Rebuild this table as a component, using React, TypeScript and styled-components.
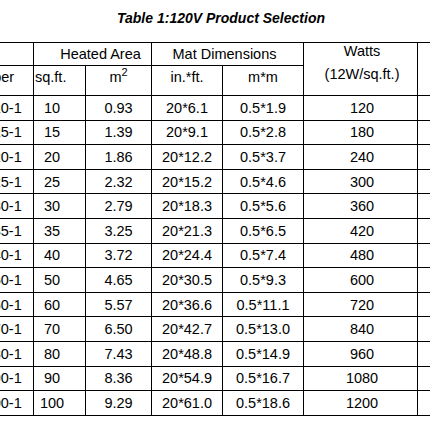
import React from 'react'
import styled, { createGlobalStyle } from 'styled-components'

const GlobalStyle = createGlobalStyle`
  html, body {
    margin: 0;
    padding: 0;
    background: #fff;
    overflow: hidden;
  }
  body {
    font-family: 'Liberation Sans', Arial, sans-serif;
    color: #000;
  }
`

type Row = [number, string, string, string, number]

const ROWS: Row[] = [
  [10, '0.93', '20*6.1', '0.5*1.9', 120],
  [15, '1.39', '20*9.1', '0.5*2.8', 180],
  [20, '1.86', '20*12.2', '0.5*3.7', 240],
  [25, '2.32', '20*15.2', '0.5*4.6', 300],
  [30, '2.79', '20*18.3', '0.5*5.6', 360],
  [35, '3.25', '20*21.3', '0.5*6.5', 420],
  [40, '3.72', '20*24.4', '0.5*7.4', 480],
  [50, '4.65', '20*30.5', '0.5*9.3', 600],
  [60, '5.57', '20*36.6', '0.5*11.1', 720],
  [70, '6.50', '20*42.7', '0.5*13.0', 840],
  [80, '7.43', '20*48.8', '0.5*14.9', 960],
  [90, '8.36', '20*54.9', '0.5*16.7', 1080],
  [100, '9.29', '20*61.0', '0.5*18.6', 1200],
]

const partNo = (sqft: number) => `HM120V-${String(sqft).padStart(3, '0')}-1`

const App = () => {
  return (
    <Page>
      <GlobalStyle />
      <Title>Table 1:120V Product Selection</Title>
      <Sheet>
        <colgroup>
          <col style={{ width: 121 }} />
          <col style={{ width: 52 }} />
          <col style={{ width: 66 }} />
          <col style={{ width: 71 }} />
          <col style={{ width: 81 }} />
          <col style={{ width: 114 }} />
          <col style={{ width: 80 }} />
        </colgroup>
        <thead>
          <TopRow>
            <Cell />
            <Cell colSpan={2} $padLeft={16}>
              Heated Area
            </Cell>
            <Cell colSpan={2} $padRight={6}>
              Mat Dimensions
            </Cell>
            <Cell rowSpan={2} $valign="top" $padLeft={3}>
              <Line>Watts</Line>
              <Line $gap={7}>(12W/sq.ft.)</Line>
            </Cell>
            <Cell rowSpan={2} />
          </TopRow>
          <SubRow>
            <Cell $valign="top">Part Number</Cell>
            <Cell $valign="top" $align="left" $padLeft={1}>
              sq.ft.
            </Cell>
            <Cell $valign="top">
              m<Sup>2</Sup>
            </Cell>
            <Cell $valign="top">in.*ft.</Cell>
            <Cell $valign="top">m*m</Cell>
          </SubRow>
        </thead>
        <tbody>
          {ROWS.map(([sqft, m2, inFt, mm, watts]) => (
            <DataRow key={sqft}>
              <Cell>{partNo(sqft)}</Cell>
              <Cell $padRight={15}>{sqft}</Cell>
              <Cell>{m2}</Cell>
              <Cell>{inFt}</Cell>
              <Cell>{mm}</Cell>
              <Cell $padLeft={3}>{watts}</Cell>
              <Cell />
            </DataRow>
          ))}
        </tbody>
      </Sheet>
    </Page>
  )
}

export default App

const Page = styled.div`
  width: 430px;
  height: 430px;
  overflow: hidden;
  background: #fff;
`

const Title = styled.div`
  padding: 10px 0 0 117px;
  height: 22px;
  font-size: 14px;
  line-height: 16px;
  font-weight: bold;
  font-style: italic;
  white-space: nowrap;
`

const Sheet = styled.table`
  margin-top: 10px;
  margin-left: -88px;
  width: 586px;
  table-layout: fixed;
  border-collapse: separate;
  border-spacing: 0;
  border-top: 1px solid #000;
  border-left: 1px solid #000;
  font-size: 14.5px;
`

const TopRow = styled.tr`
  height: 23px;
`

const SubRow = styled.tr`
  height: 30px;
`

const DataRow = styled.tr`
  height: 24.6px;
`

const Cell = styled.td<{
  $align?: 'left' | 'center'
  $valign?: 'top' | 'middle'
  $padLeft?: number
  $padRight?: number
}>`
  box-sizing: border-box;
  padding: ${(p) => (p.$valign === 'top' ? 3 : 0)}px ${(p) => p.$padRight ?? 0}px 0
    ${(p) => p.$padLeft ?? 0}px;
  border-right: 1px solid #000;
  border-bottom: 1px solid #000;
  text-align: ${(p) => p.$align ?? 'center'};
  vertical-align: ${(p) => p.$valign ?? 'middle'};
  line-height: 16px;
  white-space: nowrap;
  overflow: hidden;
  font-weight: normal;
`

const Line = styled.div<{ $gap?: number }>`
  margin-top: ${(p) => p.$gap ?? -3}px;
  line-height: 16px;
`

const Sup = styled.sup`
  font-size: 11px;
  line-height: 0;
  vertical-align: 6px;
`
